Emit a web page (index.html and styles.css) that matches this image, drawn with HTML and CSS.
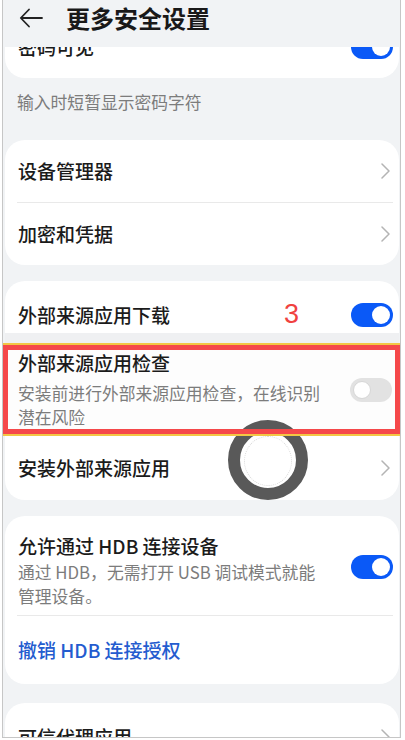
FILE: index.html
```html
<!DOCTYPE html>
<html>

<head>
    <meta charset="utf-8" />
    <title>更多安全设置</title>
    <link rel="stylesheet" href="styles.css">
</head>

<body>
    <div class="frame">
        <div class="bar">
            <svg class="back" width="24" height="24" viewBox="0 0 24 24">
                <path d="M23 12H2 M10 3.5 L1.8 12 L10 20.5" />
            </svg>
            <h1>更多安全设置</h1>
        </div>
        <div class="scroll">
            <div class="card cut">
                <div class="row">
                    <span class="name">密码可见</span>
                    <span class="switch"><span class="knob"></span></span>
                </div>
            </div>
            <p class="hint">输入时短暂显示密码字符</p>

            <div class="card">
                <div class="row">
                    <span class="name">设备管理器</span>
                    <svg class="more" width="16" height="16" viewBox="0 0 16 16"><path d="M5 1 L12 8 L5 15" /></svg>
                </div>
                <div class="sep"></div>
                <div class="row">
                    <span class="name">加密和凭据</span>
                    <svg class="more" width="16" height="16" viewBox="0 0 16 16"><path d="M5 1 L12 8 L5 15" /></svg>
                </div>
            </div>

            <div class="card">
                <div class="row first">
                    <span class="name">外部来源应用下载</span>
                    <span class="tag">3</span>
                    <span class="switch"><span class="knob"></span></span>
                </div>
                <div class="strip"></div>
                <div class="mark">
                    <div class="text">
                        <div class="name">外部来源应用检查</div>
                        <div class="sub">安装前进行外部来源应用检查，在线识别潜在风险</div>
                    </div>
                    <span class="switch off"><span class="knob"></span></span>
                </div>
                <div class="row low">
                    <span class="name">安装外部来源应用</span>
                    <svg class="more" width="16" height="16" viewBox="0 0 16 16"><path d="M5 1 L12 8 L5 15" /></svg>
                </div>
            </div>

            <div class="card">
                <div class="row block">
                    <div class="text">
                        <div class="name">允许通过 HDB 连接设备</div>
                        <div class="sub">通过 HDB，无需打开 USB 调试模式就能管理设备。</div>
                    </div>
                    <span class="switch"><span class="knob"></span></span>
                </div>
                <div class="sep"></div>
                <div class="row link">
                    <span class="name">撤销 HDB 连接授权</span>
                </div>
            </div>

            <div class="card last">
                <div class="row">
                    <span class="name">可信代理应用</span>
                    <svg class="more" width="16" height="16" viewBox="0 0 16 16"><path d="M5 1 L12 8 L5 15" /></svg>
                </div>
            </div>
        </div>
        <div class="tap"></div>
    </div>
</body>

</html>
```

FILE: styles.css
```css
* {
    font-family: "Noto Sans CJK SC", "Noto Sans", sans-serif;
    box-sizing: border-box;
}

body {
    margin: 0;
    background-color: #fff;
}

.frame {
    position: relative;
    width: 399px;
    height: 738px;
    margin-left: 2px;
    border: 1px #c6c6c6 solid;
    border-top: none;
    background-color: #f1f3f5;
    overflow: hidden;
}

.bar {
    display: flex;
    align-items: center;
    gap: 23px;
    height: 47px;
    padding: 0 0 11px 16px;
}

.back path {
    fill: none;
    stroke: #222;
    stroke-width: 1.8;
    stroke-linecap: round;
    stroke-linejoin: round;
}

h1 {
    margin: 0;
    font-size: 24px;
    font-weight: 700;
    line-height: 36px;
    color: #191919;
}

.scroll {
    height: 690px;
    overflow: hidden;
}

.card {
    background-color: #fff;
    border-radius: 20px;
    margin: 0 1px 16px 2px;
}

.cut {
    margin-top: -31px;
    margin-bottom: 0;
}

.row {
    position: relative;
    display: flex;
    align-items: center;
    justify-content: space-between;
    height: 62px;
    padding: 0 6px 0 13px;
}

.cut .row {
    height: 62px;
}

.name {
    font-size: 19px;
    font-weight: 500;
    line-height: 26px;
    color: #1b1b1b;
}

.sub {
    font-size: 16.8px;
    line-height: 24px;
    color: #7c7c7c;
}

.hint {
    margin: 0 0 26px;
    padding: 12px 0 0 14px;
    font-size: 16.8px;
    line-height: 24px;
    color: #7c7c7c;
}

.sep {
    height: 1px;
    margin: 0 6px 0 12px;
    background-color: #e9e9e9;
}

.more path {
    fill: none;
    stroke: #b4b4b4;
    stroke-width: 1.5;
    stroke-linecap: round;
    stroke-linejoin: round;
}

.switch {
    flex: none;
    display: flex;
    justify-content: flex-end;
    width: 42px;
    height: 24px;
    padding: 3px;
    border-radius: 12px;
    background-color: #0a59f7;
}

.knob {
    width: 18px;
    height: 18px;
    border-radius: 50%;
    background-color: #fff;
}

.switch.off {
    justify-content: flex-start;
    background-color: #e2e2e2;
}

.switch.off .knob {
    border: 1px #d6d6d6 solid;
}

/* card with the marked row */
.first {
    height: 52px;
    padding-top: 16px;
}

.tag {
    position: absolute;
    left: 279px;
    top: 20px;
    font-family: "Liberation Sans", sans-serif;
    font-size: 27px;
    line-height: 27px;
    color: #f0423f;
}

.strip {
    height: 10px;
    background-color: #eff0f2;
}

.mark {
    position: relative;
    display: flex;
    align-items: center;
    justify-content: space-between;
    margin: 2px -1px 2px -2px;
    height: 89px;
    padding: 5px 8px 5px 15px;
    background-color: #fdfdfd;
}

.mark::after {
    content: "";
    position: absolute;
    inset: 0;
    z-index: 3;
    border: 5px #f5484a solid;
    box-shadow: 0 -2px 0 #f2c744, 0 2px 0 #f2c744;
}

.mark .name {
    margin-bottom: 5px;
}

.text {
    width: 312px;
}

.low {
    height: 64px;
    border-radius: 0 0 20px 20px;
}

.block {
    height: 99px;
    align-items: flex-start;
    padding-top: 17px;
}

.block .name {
    display: block;
    margin-bottom: 1px;
}

.block .switch {
    margin-top: 22px;
}

.link {
    height: 68px;
}

.link .name {
    color: #245ccf;
}

.last {
    margin-top: 19px;
}

.last .row {
    padding-top: 6px;
}

.tap {
    position: absolute;
    left: 225px;
    top: 420px;
    z-index: 2;
    width: 80px;
    height: 80px;
    border: 12px #595959 solid;
    border-radius: 50%;
    background-color: #fff;
}

.tap::after {
    content: "";
    display: block;
    margin: 4px;
    height: 48px;
    border: 1px #d8d8d8 dotted;
    border-radius: 50%;
}
```
